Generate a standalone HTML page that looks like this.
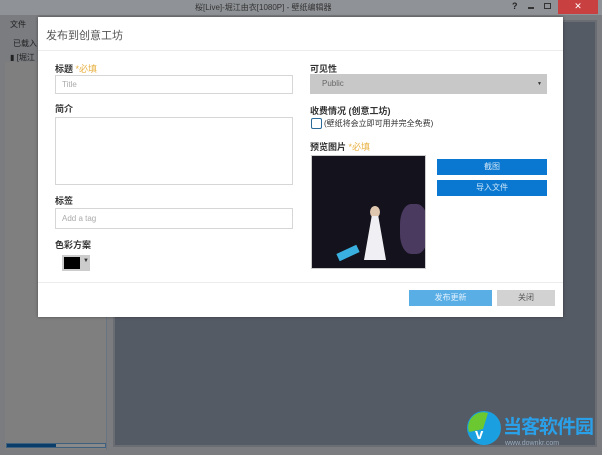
<!DOCTYPE html>
<html><head><meta charset="utf-8"><style>
*{margin:0;padding:0;box-sizing:border-box}
body{width:602px;height:455px;overflow:hidden;background:#4a5260;font-family:"Liberation Sans","Noto Sans CJK SC",sans-serif;position:relative;font-size:9px;color:#333}
.a{position:absolute}
.lbl{font-size:9px;color:#333;font-weight:bold}
.req{color:#e8b040;font-weight:normal}
.inp{border:1px solid #d6d6d6;background:#fff;color:#aaa;font-size:8px;padding-left:6px;line-height:17px}
</style></head><body>
<div class="a" style="left:0;top:0;width:602px;height:455px;background:#7a7c80"></div>
<div class="a" style="left:0;top:0;width:602px;height:15px;background:#8f9296"></div>
<div class="a" style="left:195px;top:2px;font-size:8px;color:#333">桜[Live]-堀江由衣[1080P] - 壁纸编辑器</div>
<div class="a" style="left:512px;top:1px;font-size:9px;color:#222;font-weight:bold">?</div>
<div class="a" style="left:528px;top:7px;width:6px;height:2px;background:#333"></div>
<div class="a" style="left:544px;top:3px;width:7px;height:6px;border:1px solid #333"></div>
<div class="a" style="left:558px;top:0;width:40px;height:14px;background:#c8403f;color:#fff;text-align:center;font-size:9px;line-height:13px">✕</div>
<div class="a" style="left:10px;top:19px;font-size:8px;color:#222">文件</div>
<div class="a" style="left:13px;top:38px;font-size:8px;color:#222">已载入</div>
<div class="a" style="left:10px;top:52px;font-size:8px;color:#222">▮ [堀江</div>
<div class="a" style="left:5px;top:62px;width:102px;height:388px;background:#7f7f7f;border-right:1px solid #6a7480"></div>
<div class="a" style="left:6px;top:443px;width:100px;height:5px;background:#8a8a8a;border:1px solid #406080"></div>
<div class="a" style="left:7px;top:444px;width:49px;height:3px;background:#0a3d6a"></div>
<div class="a" style="left:113px;top:20px;width:484px;height:427px;background:#555b65;border:2px solid #6a6e74"></div>
<!-- watermark -->
<svg class="a" style="left:466px;top:410px" width="36" height="36"><circle cx="18" cy="18" r="17" fill="#1aa0e0"/><path d="M3 22 A15 15 0 0 1 22 3 L17 19 Z" fill="#6cc830"/><text x="9" y="29" font-size="15" fill="#fff" font-family="Liberation Sans" font-weight="bold">v</text></svg>
<div class="a" style="left:503px;top:412px;font-size:19px;color:#2aa0e8;font-weight:bold;letter-spacing:-1px">当客软件园</div>
<div class="a" style="left:505px;top:440px;font-size:7px;color:#9ab">www.downkr.com</div>
<!-- dialog -->
<div class="a" style="left:38px;top:17px;width:525px;height:300px;background:#fff;box-shadow:0 0 3px rgba(0,0,0,.4)"></div>
<div class="a" style="left:46px;top:27px;font-size:11px;color:#555">发布到创意工坊</div>
<div class="a" style="left:38px;top:50px;width:525px;height:1px;background:#ececec"></div>
<div class="a" style="left:38px;top:282px;width:525px;height:1px;background:#ececec"></div>
<div class="a lbl" style="left:55px;top:62px">标题 <span class="req">*必填</span></div>
<div class="a inp" style="left:55px;top:75px;width:238px;height:19px">Title</div>
<div class="a lbl" style="left:55px;top:102px">简介</div>
<div class="a inp" style="left:55px;top:117px;width:238px;height:68px"></div>
<div class="a lbl" style="left:55px;top:194px">标签</div>
<div class="a inp" style="left:55px;top:208px;width:238px;height:21px;line-height:19px">Add a tag</div>
<div class="a lbl" style="left:55px;top:238px">色彩方案</div>
<div class="a" style="left:62px;top:255px;width:28px;height:16px;background:#ccc"></div>
<div class="a" style="left:64px;top:257px;width:16px;height:12px;background:#000"></div>
<div class="a" style="left:83px;top:258px;font-size:6px;color:#333">▼</div>
<div class="a lbl" style="left:310px;top:62px">可见性</div>
<div class="a" style="left:310px;top:74px;width:237px;height:20px;background:#c8c8c8;color:#666;font-size:8px;line-height:20px;padding-left:12px">Public</div>
<div class="a" style="left:537px;top:81px;font-size:5px;color:#333">▼</div>
<div class="a lbl" style="left:310px;top:104px">收费情况 (创意工坊)</div>
<div class="a" style="left:311px;top:118px;width:11px;height:11px;border:1.5px solid #2a6a9a;border-radius:2px"></div>
<div class="a" style="left:324px;top:118px;font-size:8px;color:#333">(壁纸将会立即可用并完全免费)</div>
<div class="a lbl" style="left:310px;top:140px">预览图片 <span class="req">*必填</span></div>
<div class="a" style="left:311px;top:155px;width:115px;height:114px;background:#14121c;border:1px solid #ccc;overflow:hidden">
 <div class="a" style="left:88px;top:48px;width:28px;height:50px;background:#4a3a60;border-radius:40%"></div>
 <div class="a" style="left:58px;top:50px;width:10px;height:12px;background:#e0c8b0;border-radius:50%"></div>
 <div class="a" style="left:52px;top:60px;width:22px;height:44px;background:#f0f0f4;clip-path:polygon(35% 0,65% 0,100% 100%,0 100%)"></div>
 <div class="a" style="left:25px;top:93px;width:22px;height:8px;background:#3ab0e0;transform:rotate(-25deg)"></div>
</div>
<div class="a" style="left:437px;top:159px;width:110px;height:16px;background:#0a78d0;color:#cfe6f8;font-size:8px;text-align:center;line-height:16px">截图</div>
<div class="a" style="left:437px;top:180px;width:110px;height:16px;background:#0a78d0;color:#cfe6f8;font-size:8px;text-align:center;line-height:16px">导入文件</div>
<div class="a" style="left:409px;top:290px;width:83px;height:16px;background:#5aaee6;color:#e0f0fc;font-size:8px;text-align:center;line-height:16px">发布更新</div>
<div class="a" style="left:497px;top:290px;width:58px;height:16px;background:#d2d2d2;color:#555;font-size:8px;text-align:center;line-height:16px">关闭</div>
</body></html>
